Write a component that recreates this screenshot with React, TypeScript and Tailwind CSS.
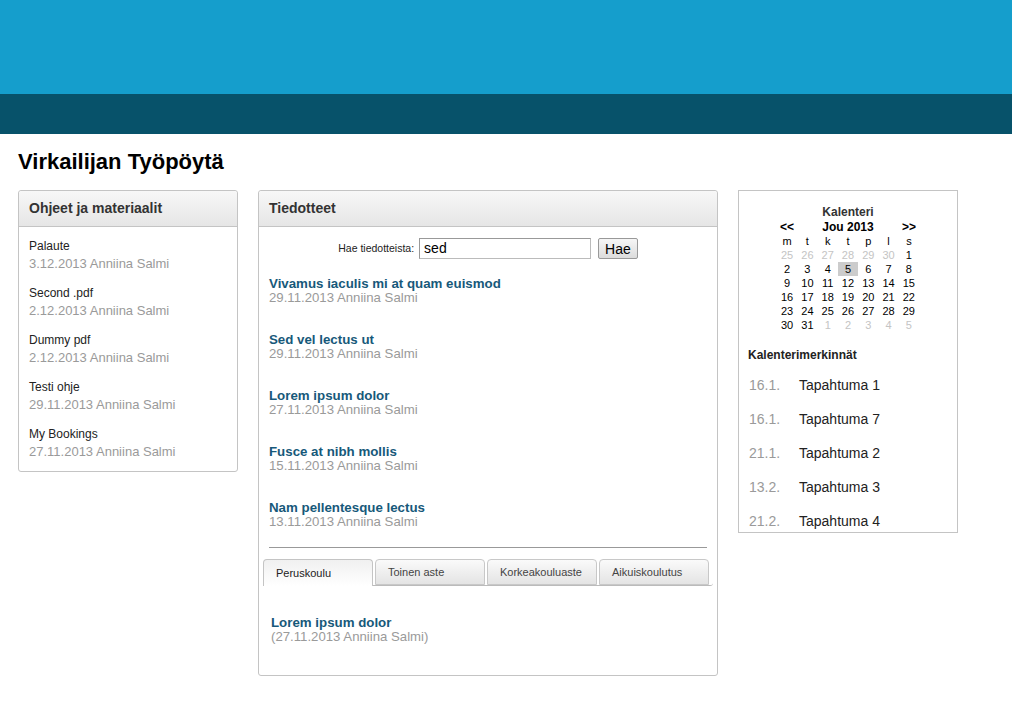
import React from 'react';

interface Doc {
  name: string;
  meta: string;
}

const docs: Doc[] = [
  { name: "Palaute", meta: "3.12.2013 Anniina Salmi" },
  { name: "Second .pdf", meta: "2.12.2013 Anniina Salmi" },
  { name: "Dummy pdf", meta: "2.12.2013 Anniina Salmi" },
  { name: "Testi ohje", meta: "29.11.2013 Anniina Salmi" },
  { name: "My Bookings", meta: "27.11.2013 Anniina Salmi" }
];

const news: Doc[] = [
  { name: "Vivamus iaculis mi at quam euismod", meta: "29.11.2013 Anniina Salmi" },
  { name: "Sed vel lectus ut", meta: "29.11.2013 Anniina Salmi" },
  { name: "Lorem ipsum dolor", meta: "27.11.2013 Anniina Salmi" },
  { name: "Fusce at nibh mollis", meta: "15.11.2013 Anniina Salmi" },
  { name: "Nam pellentesque lectus", meta: "13.11.2013 Anniina Salmi" }
];

const tabs = ["Peruskoulu", "Toinen aste", "Korkeakouluaste", "Aikuiskoulutus"];

const weekDays = ["m", "t", "k", "t", "p", "l", "s"];

// [day, belongs to this month]
const weeks: [number, boolean][][] = [
  [[25, false], [26, false], [27, false], [28, false], [29, false], [30, false], [1, true]],
  [[2, true], [3, true], [4, true], [5, true], [6, true], [7, true], [8, true]],
  [[9, true], [10, true], [11, true], [12, true], [13, true], [14, true], [15, true]],
  [[16, true], [17, true], [18, true], [19, true], [20, true], [21, true], [22, true]],
  [[23, true], [24, true], [25, true], [26, true], [27, true], [28, true], [29, true]],
  [[30, true], [31, true], [1, false], [2, false], [3, false], [4, false], [5, false]]
];

const events = [
  { date: "16.1.", name: "Tapahtuma 1" },
  { date: "16.1.", name: "Tapahtuma 7" },
  { date: "21.1.", name: "Tapahtuma 2" },
  { date: "13.2.", name: "Tapahtuma 3" },
  { date: "21.2.", name: "Tapahtuma 4" }
];

const PanelHeader: React.FC<{ title: string }> = ({ title }) => (
  <div className="h-[36px] flex items-center px-[10px] bg-gradient-to-b from-[#f7f7f7] to-[#e6e6e6] border-b border-[#c4c4c4] rounded-t-[3px]">
    <h2 className="text-[14px] font-bold text-[#333]">{title}</h2>
  </div>
);

const App: React.FC = () => {
  return (
    <div className="min-h-screen bg-white font-['Liberation_Sans',Arial,sans-serif] text-[#222]">
      {/* Header bands */}
      <div className="h-[94px] bg-[#159ecc]" />
      <div className="h-[40px] bg-[#07526a]" />

      <div className="px-[18px]">
        <h1 className="text-[22px] font-bold text-black leading-[28px] mt-[14px] mb-[14px]">Virkailijan Työpöytä</h1>

        <div className="flex items-start gap-5">
          {/* Left: documents */}
          <div className="w-[220px] border border-[#c4c4c4] rounded-[3px]">
            <PanelHeader title="Ohjeet ja materiaalit" />
            <div className="px-[10px] pt-[11px] pb-[10px] flex flex-col gap-[12px]">
              {docs.map((d, i) => (
                <div key={i}>
                  <div className="text-[12px] leading-[16px] text-[#222]">{d.name}</div>
                  <div className="text-[13px] leading-[18px] text-[#9a9a9a] mt-[1px]">{d.meta}</div>
                </div>
              ))}
            </div>
          </div>

          {/* Middle: news */}
          <div className="w-[460px] h-[486px] border border-[#c4c4c4] rounded-[3px]">
            <PanelHeader title="Tiedotteet" />
            <div className="flex items-center justify-center pt-[11px]">
              <span className="text-[10.5px] text-[#222] mr-[5px]">Hae tiedotteista:</span>
              <input
                readOnly
                value="sed"
                className="w-[172px] h-[21px] px-[4px] text-[14px] text-black border border-[#bbb] border-t-[#999] border-l-[#999] outline-none"
              />
              <button className="ml-[7px] h-[21px] px-[6px] text-[14px] text-black bg-gradient-to-b from-[#f6f6f6] to-[#dcdcdc] border border-[#999] rounded-[2px] leading-none">
                Hae
              </button>
            </div>

            <div className="px-[10px] pt-[17px] flex flex-col gap-[28px]">
              {news.map((n, i) => (
                <div key={i}>
                  <div className="text-[13.3px] leading-[15px] font-bold text-[#17597a]">{n.name}</div>
                  <div className="text-[13.2px] leading-[13px] text-[#9a9a9a]">{n.meta}</div>
                </div>
              ))}
            </div>

            <div className="mx-[10px] mt-[19px] border-t border-[#999]" />

            {/* Tabs */}
            <div className="mx-[4px] mt-[11px]">
              <div className="flex gap-[2px] border-b border-[#bbb] rounded-b-[3px] h-[27px]">
                {tabs.map((t, i) => (
                  <div
                    key={i}
                    className={
                      i === 0
                        ? "w-[110px] h-[27px] flex items-center pl-[12px] text-[11px] text-[#222] border border-b-0 border-[#c4c4c4] rounded-t-[4px] bg-gradient-to-b from-[#f0f0f0] to-white"
                        : "w-[110px] h-[26px] flex items-center pl-[12px] text-[11px] text-[#444] border border-[#c8c8c8] rounded-t-[4px] bg-gradient-to-b from-[#fafafa] to-[#e4e4e4]"
                    }
                  >
                    {t}
                  </div>
                ))}
              </div>
              <div className="px-[8px] pt-[29px]">
                <div className="text-[13.3px] leading-[15px] font-bold text-[#17597a]">Lorem ipsum dolor</div>
                <div className="text-[13.2px] leading-[13px] text-[#9a9a9a]">(27.11.2013 Anniina Salmi)</div>
              </div>
            </div>
          </div>

          {/* Right: calendar */}
          <div className="w-[220px] h-[343px] border border-[#c4c4c4] overflow-hidden">
            <div className="pt-[14px] flex flex-col items-center">
              <div className="text-[12px] font-bold text-[#333] leading-[14px]">Kalenteri</div>
              <table className="mt-[1px] border-collapse text-[11px] leading-[14px] text-black">
                <thead>
                  <tr className="font-bold text-[12px]">
                    <td className="text-center">&lt;&lt;</td>
                    <td colSpan={5} className="text-center">Jou 2013</td>
                    <td className="text-center">&gt;&gt;</td>
                  </tr>
                  <tr>
                    {weekDays.map((w, i) => (
                      <td key={i} className="w-[20.3px] text-center">{w}</td>
                    ))}
                  </tr>
                </thead>
                <tbody>
                  {weeks.map((wk, r) => (
                    <tr key={r}>
                      {wk.map(([d, cur], c) => (
                        <td
                          key={c}
                          className={
                            d === 5 && cur
                              ? "text-center bg-[#cccccc]"
                              : cur
                              ? "text-center"
                              : "text-center text-[#c4c4c4]"
                          }
                        >
                          {d}
                        </td>
                      ))}
                    </tr>
                  ))}
                </tbody>
              </table>
            </div>

            <div className="px-[9px] pt-[16px]">
              <div className="text-[12px] font-bold text-[#222] leading-[14px]">Kalenterimerkinnät</div>
              <div className="flex flex-col gap-[18px] mt-[15px]">
                {events.map((e, i) => (
                  <div key={i} className="flex text-[14px] leading-[16px]">
                    <span className="w-[51px] pl-[1px] text-[#9a9a9a]">{e.date}</span>
                    <span className="text-[#222]">{e.name}</span>
                  </div>
                ))}
              </div>
            </div>
          </div>
        </div>
      </div>
    </div>
  );
};

export default App;
